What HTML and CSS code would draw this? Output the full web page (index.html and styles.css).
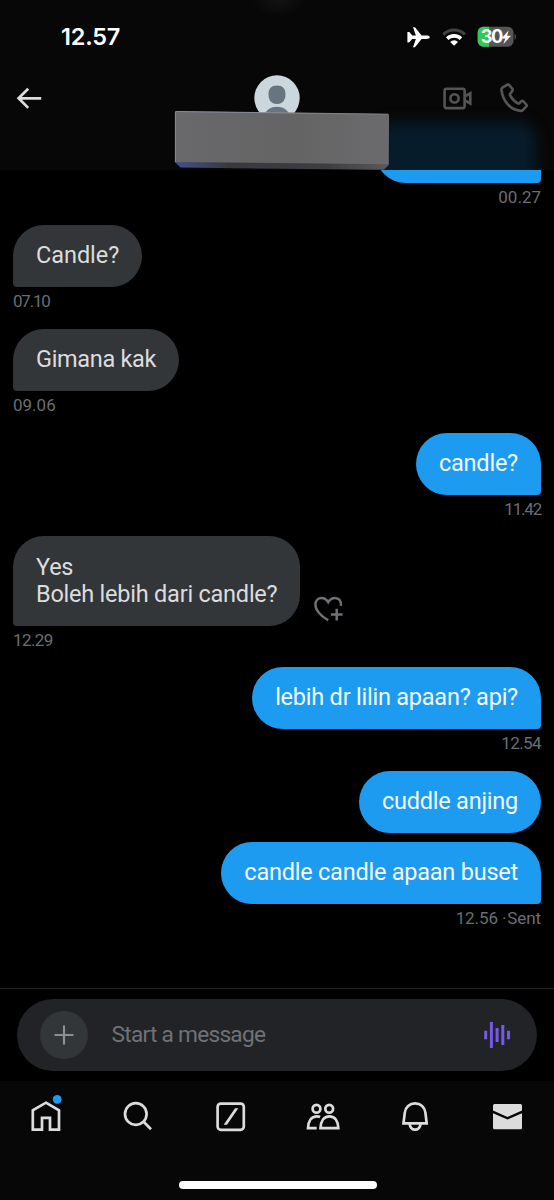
FILE: index.html
```html
<!DOCTYPE html>
<html lang="id">
<head>
<meta charset="utf-8">
<title>Messages</title>
<link rel="stylesheet" href="styles.css">
</head>
<body>
<div class="phone">
  <header class="header">
    <div class="glow"></div>
    <div class="haze"></div>
    <div class="status">
      <span class="clock">12.57</span>
      <svg class="status-icons" viewBox="404 22 114 30" width="114" height="30">
        <path fill="#fff" d="M429.800 37.200c0 1-1.500 1.700-3.300 1.700h-4.900l-6.200 7.800c-.3.400-.7.500-1.200.5h-1.200l2.900-8.300h-3.700l-2.600 3.200c-.3.300-.6.400-1 .4h-1.200v-10.600h1.200c.4 0 .7.100 1 .4l2.600 3.200h3.700l-2.900-8.300h1.200c.5 0 .9.100 1.200.5l6.200 7.800h4.900c1.800 0 3.300.7 3.300 1.700z"/>
        <path fill="none" stroke="#444" stroke-width="3" d="M443.300 34.300a15.800 15.800 0 0 1 21.600 0"/>
        <path fill="none" stroke="#fff" stroke-width="3.600" d="M447.200 38.600a10.200 10.200 0 0 1 13.800 0"/>
        <path fill="#fff" d="M450.200 41.900a5.700 5.700 0 0 1 7.800 0L454.700 45.200q-.6.500-1.200 0z"/>
        <rect x="477.700" y="26.800" width="35.800" height="19.900" rx="5.500" fill="#555"/>
        <path fill="#34c759" d="M489 26.800v19.900h-5.800a5.500 5.500 0 0 1-5.500-5.500v-8.900a5.500 5.500 0 0 1 5.500-5.500z"/>
        <path fill="#555" d="M514.600 33.600c1.800.8 1.800 5.500 0 6.300z"/>
        <text class="battery-text" x="480.800" y="43.400">30</text>
        <path fill="#fff" d="M508.600 30.600l-6.800 7.500q-.3.500.3.500h3.200l-2 5.500 7.400-7.900q.3-.5-.3-.5h-3.300z"/>
      </svg>
    </div>
    <div class="nav">
      <svg class="back" viewBox="14 83 30 30" width="30" height="30"><path d="M41.200 98.300H18.700M28.200 88.700L18.600 98.300L28.200 107.900"/></svg>
      <svg class="avatar" viewBox="254 75 46 46" width="46" height="46">
        <circle cx="277" cy="98" r="22.700" fill="#ccd6dd"/>
        <path fill="#66757f" d="M277 85.600c5.500 0 8.500 3.200 8.500 8.400 0 6-2.500 9.900-8.500 9.900s-8.500-3.900-8.500-9.900c0-5.200 3-8.400 8.500-8.400zM264 115.500c2-5.500 7-8.700 13-8.700s11 3.200 13 8.700z"/>
      </svg>
      <svg class="calls" viewBox="440 80 92 36" width="92" height="36">
        <rect x="444.600" y="88.700" width="20" height="19.400" rx="1.800"/>
        <circle cx="454.500" cy="98.400" r="4.100"/>
        <path d="M465 96.300l5.300-3v10.200l-5.300-3"/>
        <path d="M507.300 84.600q.8-.6 1.500.1l3.600 4.200q.6.800.1 1.600l-2.400 3.400q-.4.700 0 1.500c2 3.700 4.300 6.100 7.700 8q.8.400 1.500-.1l2.300-2.200q.8-.6 1.600 0l3.200 3.500q.8.800.1 1.600l-3.600 3.900q-.8.900-2.200.8c-10.600-1.200-18-9.700-19.300-21.200q-.1-1.100.7-1.800z"/>
      </svg>
    </div>
    <svg class="plate" viewBox="172 108 220 64" width="220" height="64">
      <defs>
        <linearGradient id="face"><stop offset="0" stop-color="#69696b"/><stop offset=".55" stop-color="#646465"/><stop offset="1" stop-color="#6b6b6d"/></linearGradient>
        <linearGradient id="edge"><stop offset="0" stop-color="#44508a"/><stop offset=".25" stop-color="#38393f"/><stop offset=".7" stop-color="#3d3d3f"/><stop offset="1" stop-color="#59595b"/></linearGradient>
        <linearGradient id="rim"><stop offset="0" stop-color="#8494b8"/><stop offset=".5" stop-color="#929496"/><stop offset="1" stop-color="#828284"/></linearGradient>
      </defs>
      <path fill="url(#edge)" d="M175.200 160L388.600 160V165L384 169.800L180.500 167.600L175 162.200z"/>
      <path fill="url(#face)" d="M176 111.200L388 113.900Q389.200 114 389.100 115.200L388.700 164.200L175.200 162V112q0-.8.800-.8z"/>
      <path fill="none" stroke="url(#rim)" stroke-width=".9" d="M175.400 162V112q0-.5.800-.5L388 114.200"/>
    </svg>
  </header>

  <main class="chat">
    <div class="cut"><div class="bubble sent cut-bubble"></div></div>
    <div class="meta right">00.27</div>
    <div class="bubble got"><span class="close">Candle?</span></div>
    <div class="meta tighter">07.10</div>
    <div class="bubble got"><span class="closer">Gimana kak</span></div>
    <div class="meta">09.06</div>
    <div class="bubble sent"><span>candle?</span></div>
    <div class="meta right tighter">11.42</div>
    <div class="with-react">
      <div class="bubble got"><span>Yes<br>Boleh lebih dari candle?</span></div>
      <svg class="react" viewBox="312 594 34 30" width="34" height="30">
        <path d="M328.200 620.200c-6.500-3.900-12.800-9.400-12.800-15.500 0-4 2.700-6.800 6.200-6.800 3 0 5 1.600 6.600 4.300 1.600-2.700 3.700-4.300 6.700-4.300 4 0 6.700 3 6 8M336.700 608.800v11.600M330.900 614.600h11.600"/>
      </svg>
    </div>
    <div class="meta tight">12.29</div>
    <div class="bubble sent"><span>lebih dr lilin apaan? api?</span></div>
    <div class="meta right tight">12.54</div>
    <div class="bubble sent round"><span>cuddle anjing</span></div>
    <div class="bubble sent"><span>candle candle apaan buset</span></div>
    <div class="meta right status-line">12.56 <span class="dot-sep">·</span>Sent</div>
  </main>

  <section class="composer">
    <div class="field">
      <div class="plus"><svg viewBox="0 0 24 24" width="24" height="24"><path d="M12 2.500v19M2.500 12h19"/></svg></div>
      <span class="placeholder">Start a message</span>
      <svg class="voice" viewBox="482 1020 30 30" width="30" height="30"><path d="M485.700 1030.700v8.600M491.400 1022v26M497.100 1028v14M502.800 1025v20M508.500 1030.700v8.600"/></svg>
    </div>
  </section>

  <footer class="bottom">
    <nav class="tabs">
      <svg viewBox="28 1092 36 44" width="36" height="44"><path d="M45.900 1102.700L59 1110.300V1129.600H50V1117.900H42V1129.600H32.800V1110.300z"/><circle class="badge" cx="57.200" cy="1099.300" r="4.400"/></svg>
      <svg viewBox="120 1092 36 44" width="36" height="44"><circle cx="135.800" cy="1114" r="10.800"/><path d="M143.600 1121.800L151 1129.200"/></svg>
      <svg viewBox="213 1092 36 44" width="36" height="44"><rect x="217.600" y="1103.600" width="26.200" height="26.200" rx="3.200"/><path class="solid" d="M223.700 1124.800L235 1108.300h3.300L227 1124.800z"/></svg>
      <svg viewBox="305 1092 36 44" width="36" height="44"><circle cx="316.500" cy="1108.700" r="3.900"/><circle cx="329.200" cy="1108.700" r="3.900"/><path d="M320.500 1128.100c.3-7 3.400-11.700 8.900-11.700s8.600 4.700 8.900 11.700zM316.700 1128.100H308c.3-7 3.400-11.700 8.900-11.700q2 0 3.200.6"/></svg>
      <svg viewBox="397 1092 36 44" width="36" height="44"><path d="M403.500 1123.400L404.800 1112.700c.6-5.500 4.800-9.300 10.300-9.300s9.700 3.800 10.300 9.300l1.300 10.700zM409.600 1124c.6 3.600 2.700 5.700 5.500 5.700s4.900-2.100 5.500-5.700"/></svg>
      <svg viewBox="490 1092 36 44" width="36" height="44"><path class="solid" d="M494.500 1104h26q1.500 0 1.500 1.500v4.900L507.500 1116.900L493 1110.400v-4.900q0-1.500 1.500-1.500zM493 1113.300L507.500 1119.500L522 1113.300V1127.800q0 1.500-1.500 1.500h-26q-1.500 0-1.500-1.500z"/></svg>
    </nav>
    <div class="indicator"></div>
  </footer>
</div>
</body>
</html>
```
FILE: styles.css
```css
* { box-sizing: border-box; }
body { margin: 0; background: #000; }
svg { display: block; }

.phone {
  width: 554px;
  height: 1200px;
  display: flex;
  flex-direction: column;
  overflow: hidden;
  background: #000;
  font-family: Roboto, "Liberation Sans", sans-serif;
}

/* Header */
.header {
  position: relative;
  flex: none;
  height: 170px;
  background: #070707;
}
.glow {
  position: absolute;
  left: 360px;
  top: 105px;
  width: 194px;
  height: 65px;
  overflow: hidden;
}
.glow::before {
  content: "";
  position: absolute;
  inset: 17px 18px -20px 12px;
  border-radius: 24px 18px 0 0;
  background: #071c2a;
  filter: blur(7px);
}
.haze {
  position: absolute;
  left: 250px;
  top: 0;
  width: 56px;
  height: 16px;
  background: radial-gradient(ellipse at 50% 0, #131313, #070707 70%);
}
.status {
  position: relative;
  height: 75px;
  padding: 22px 36px 0 61px;
  display: flex;
  justify-content: space-between;
  align-items: flex-start;
}
.clock {
  color: #fff;
  font: 600 23.5px/30px Inter, sans-serif;
  letter-spacing: -0.2px;
}
.battery-text {
  fill: #fff;
  font: 700 18.3px Inter, sans-serif;
  letter-spacing: -1.5px;
}
.nav {
  position: relative;
  height: 46px;
  padding: 0 22px 0 14px;
  display: grid;
  grid-template-columns: 1fr 46px 1fr;
  align-items: center;
}
.avatar { justify-self: center; margin-left: 8px; }
.back, .calls { fill: none; stroke-width: 2.7; }
.back { stroke: #dcdcdc; }
.calls { justify-self: end; stroke: #555; stroke-width: 2.6; }
.plate { position: absolute; left: 172px; top: 108px; }

/* Conversation */
.chat {
  flex: none;
  height: 819px;
  padding: 0 13px;
  display: flex;
  flex-direction: column;
  align-items: flex-start;
  border-bottom: 1px solid #202224;
}
.cut {
  align-self: flex-end;
  height: 13.4px;
  display: flex;
  align-items: flex-end;
  overflow: hidden;
}
.cut-bubble { width: 166px; }
.bubble {
  flex: none;
  min-height: 62.2px;
  padding: 17.2px 23px;
  border-radius: 31px;
  font-size: 23.5px;
  line-height: 27.4px;
  letter-spacing: -0.23px;
  white-space: nowrap;
}
.bubble span { display: block; }
.bubble .close { letter-spacing: -0.05px; }
.bubble .closer { letter-spacing: -0.33px; }
.got {
  background: #333639;
  color: #dcdddd;
  border-bottom-left-radius: 4px;
}
.sent {
  align-self: flex-end;
  background: #1d9bf0;
  color: #f4faff;
  border-bottom-right-radius: 4px;
}
.round { border-radius: 31px; margin-bottom: 9px; }
.meta {
  flex: none;
  height: 41.6px;
  padding-top: 4px;
  color: #6b6e72;
  font-size: 17px;
  line-height: 20px;
}
.right { align-self: flex-end; }
.tight { letter-spacing: -0.6px; }
.tighter { letter-spacing: -1.2px; }
.status-line { letter-spacing: -0.1px; }
.dot-sep { margin-right: 1px; }
.with-react { display: flex; align-items: flex-end; gap: 12px; }
.react { margin-bottom: 2px; fill: none; stroke: #6e7175; stroke-width: 2.5; }

/* Composer */
.composer {
  flex: none;
  height: 92px;
  padding: 10.3px 17px 0;
}
.field {
  height: 71.3px;
  padding: 0 25px 0 22.5px;
  display: flex;
  align-items: center;
  border-radius: 36px;
  background: #212327;
}
.plus {
  width: 48px;
  height: 48px;
  display: grid;
  place-items: center;
  border-radius: 50%;
  background: #323639;
}
.plus svg { fill: none; stroke: #8d9093; stroke-width: 2.2; }
.placeholder {
  flex: 1;
  margin-left: 24px;
  color: #6f7276;
  font-size: 22.7px;
  letter-spacing: -0.75px;
}
.voice { fill: none; stroke: #7659e6; stroke-width: 3; }

/* Tab bar */
.bottom {
  flex: 1;
  display: flex;
  flex-direction: column;
  background: #070707;
}
.tabs {
  height: 100px;
  padding-top: 11px;
  display: grid;
  grid-template-columns: repeat(6, 1fr);
  justify-items: center;
  align-items: start;
  fill: none;
  stroke: #dcdcdc;
  stroke-width: 2.7;
}
.solid { fill: #dcdcdc; stroke: none; }
.badge { fill: #1d9bf0; stroke: none; }
.indicator {
  width: 198px;
  height: 7.5px;
  margin-left: 178.5px;
  border-radius: 4px;
  background: #fff;
}
```
